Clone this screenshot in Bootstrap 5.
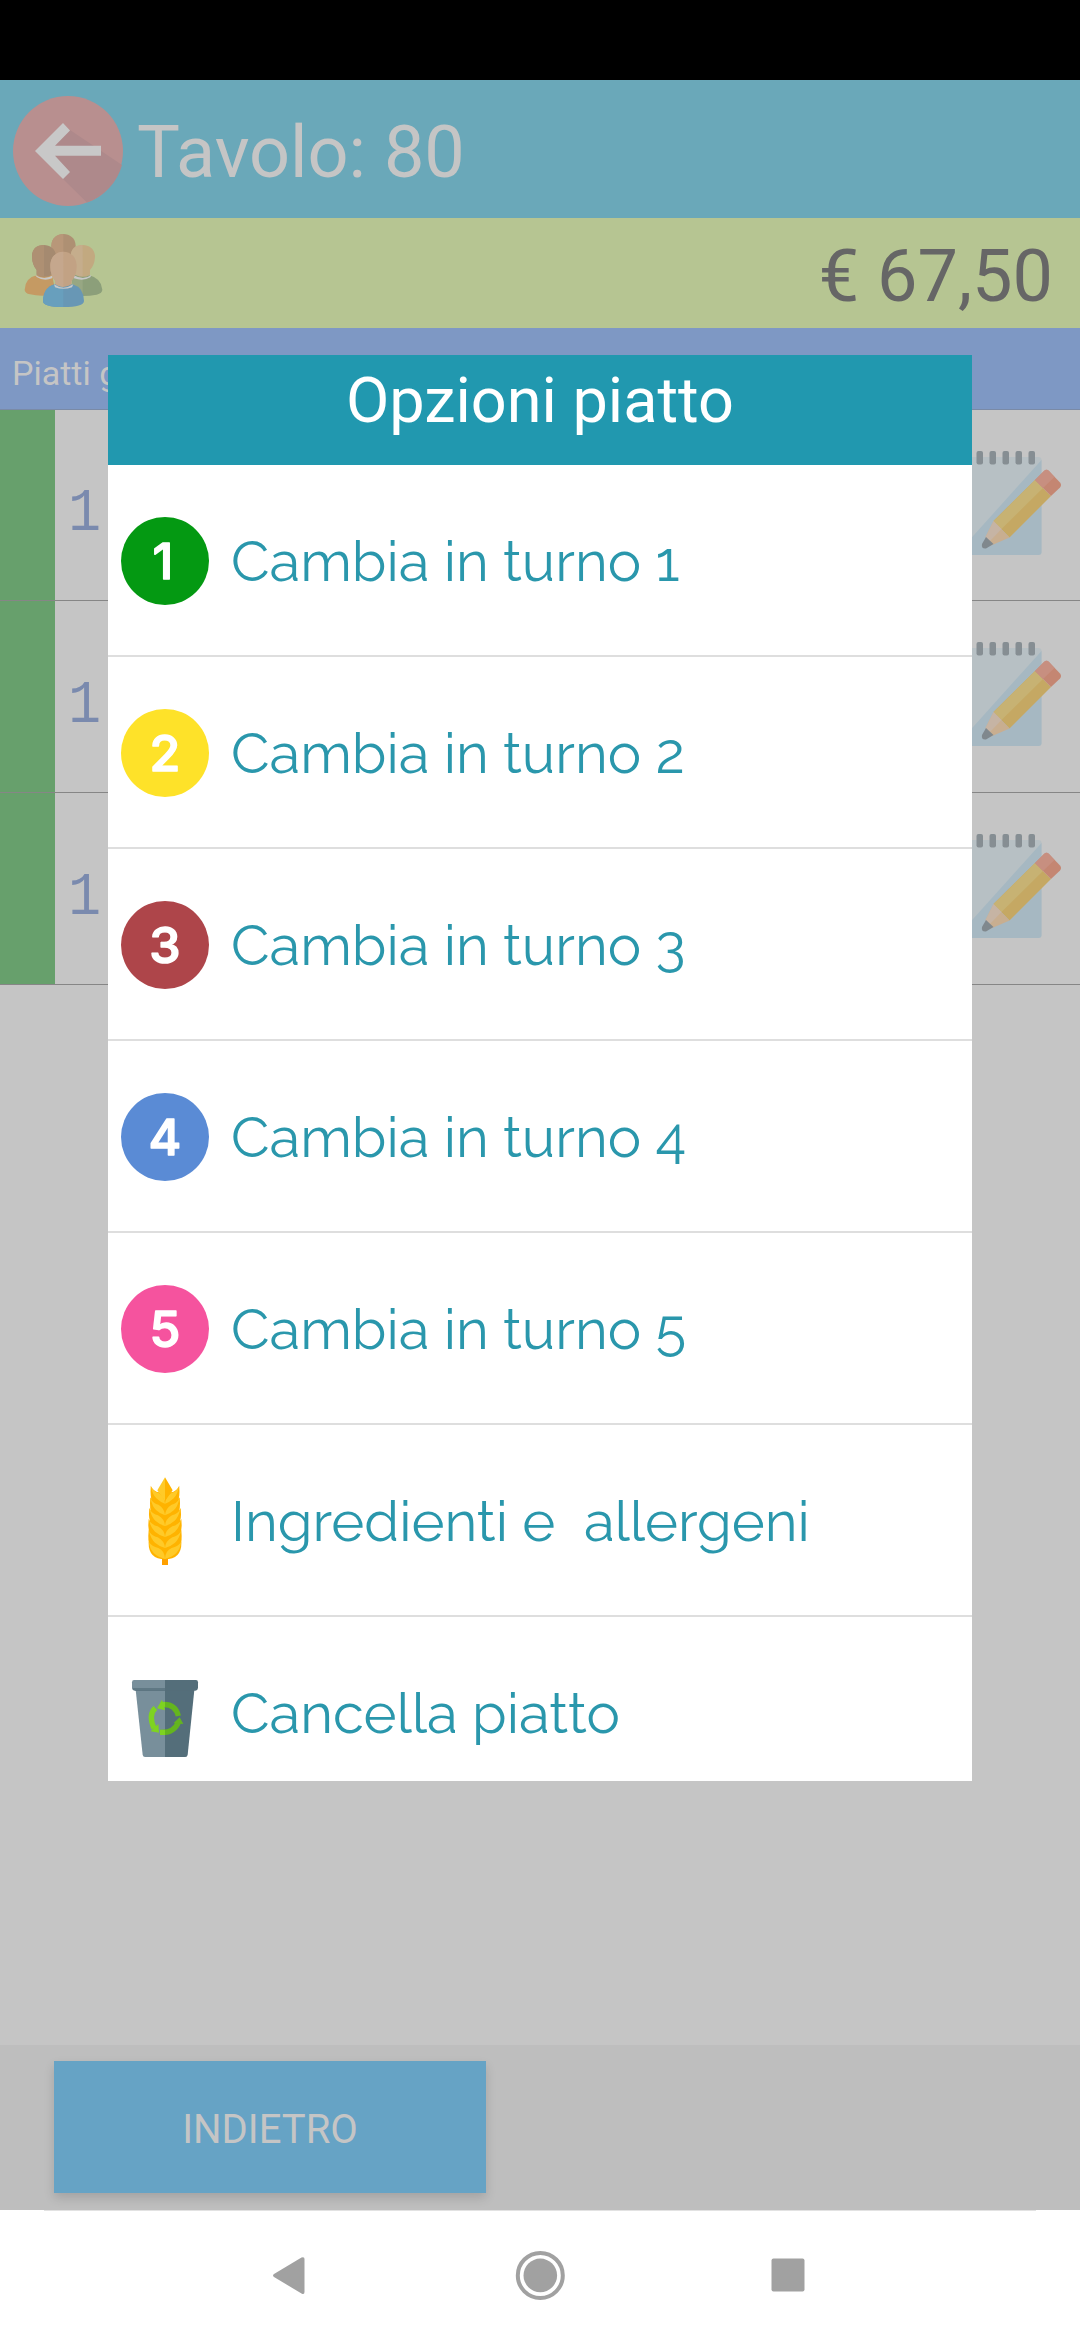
<!DOCTYPE html>
<html lang="it">
<head>
<meta charset="utf-8">
<meta name="viewport" content="width=device-width, initial-scale=1">
<title>Tavolo 80</title>
<link href="https://cdn.jsdelivr.net/npm/bootstrap@5.3.0/dist/css/bootstrap.min.css" rel="stylesheet">
<style>
  body { height: 2340px; font-family: Roboto, sans-serif; background: #c5c5c5; line-height: 1; overflow: hidden; }
  svg { display: block; flex: none; }
  .status-strip { height: 80px; }
  .table-bar { height: 138px; background: #6aa8b9; color: #c5c5c5; font-size: 72px; padding-left: 13px; }
  .table-bar span { margin-left: 14px; padding-top: 7px; }
  .total-bar { height: 110px; background: #b6c592; color: #666; font-size: 72px; padding: 0 27px 0 20px; }
  .total-bar svg { margin-bottom: 6px; }
  .total-bar span { padding-top: 7px; }
  .section-bar { height: 82px; background: #7e98c4; color: #c5c5c5; font-size: 34px; padding: 8px 0 0 12px; border-bottom: 1px solid #7a8aa6; }
  .dish { height: 192px; border-bottom: 1px solid #868686; }
  .dish:first-child { height: 191px; }
  .dish-turn { width: 55px; background: #67a06c; }
  .dish-qty { width: 60px; color: #7a8aae; font: 62px "Liberation Mono", monospace; padding-top: 17px; }
  .dish-qty span { transform: scaleX(.88); }
  .dish-note { margin: 35px 16px 0 0; }
  .bottom-bar { height: 165px; background: #bebebe; padding: 16px 54px; }
  .btn-back { width: 432px; height: 132px; background: #66a3c5; color: #c5c5c5; font-size: 40px; box-shadow: 0 5px 10px rgba(0,0,0,.14); padding: 6px 0 0; }
  .nav-strip { height: 130px; background: #fff; }
  .nav-strip .hairline { height: 1px; background: #e2e2e2; margin: 0 44px; }
  .options-panel { left: 108px; top: 355px; width: 864px; height: 1426px; }
  .options-title { height: 110px; background: #2198af; font-size: 63px; padding-top: 14px; }
  .options-panel .list-group-item { height: 192px; padding: 1px 0 0 13px; border-color: #dedede; border-width: 0 0 2px; color: #2a97ac; font: 56.200px Raleway, Lato, sans-serif; white-space: pre; }
  .options-panel .list-group-item:last-child { height: 190px; }
  .options-panel .list-group-item > span { margin-left: 22px; padding-top: 1px; }
  .num { font: 500 50px Inter, sans-serif; fill: #fff; stroke: #fff; stroke-width: 1.500px; stroke-linejoin: round; text-anchor: middle; }
</style>
</head>
<body class="d-flex flex-column">
<svg width="0" height="0" class="position-absolute">
  <defs>
    <symbol id="note" viewBox="960 445 104 115">
      <rect x="940" y="457" width="101.500" height="98" rx="3" fill="#b7c0c4"/>
      <path d="M1041.500 460V552a3 3 0 0 1-3 3H956z" fill="#a6b8c2"/>
      <g fill="#868e93"><rect x="976.500" y="451" width="6.500" height="13.500" rx="2"/><rect x="989.500" y="451" width="6.500" height="13.500" rx="2"/><rect x="1002.500" y="451" width="6.500" height="13.500" rx="2"/><rect x="1015.500" y="451" width="6.500" height="13.500" rx="2"/><rect x="1028.500" y="451" width="6.500" height="13.500" rx="2"/></g>
      <path d="M1035 480L1051 496 1009.500 537.500 993.500 521z" fill="#c5a863"/>
      <path d="M1035 480L1043 488 1001.500 529 993.500 521z" fill="#c7b273"/>
      <path d="M1035 480l9-9q2.500-2.500 5 0l11 11.500q2 2.500 0 5L1051 496z" fill="#c48672"/>
      <path d="M1035 480l9-9q2.500-2.500 5 0l5.500 6L1043 488z" fill="#c78f80"/>
      <path d="M993.500 521L1009.500 537.500 991 545.500 985.500 537z" fill="#c8ae90"/>
      <path d="M993.500 521L1001.500 529 989 542 985.500 537z" fill="#c6b4a4"/>
      <path d="M986 537L993.500 544 986 548.500Q981 549 982 544z" fill="#80888d"/>
    </symbol>
  </defs>
</svg>

<div class="status-strip bg-black flex-shrink-0"></div>

<header class="table-bar d-flex align-items-center flex-shrink-0">
  <svg width="110" height="110" viewBox="13 97 110 110" class="mb-1 mt-2">
    <circle cx="68" cy="152" r="55" fill="#b88f8f"/>
    <path d="M70 131L122 166A55 55 0 0 1 87 203.500L63 180 40 152z" fill="#ae898b"/>
    <path d="M63 124l7 7.500-15 15.200h46v10H55l15 16.300-7 7-28-28z" fill="#c8c8c8"/>
  </svg>
  <span>Tavolo: 80</span>
</header>

<section class="total-bar d-flex align-items-center justify-content-between flex-shrink-0">
  <svg width="90" height="90" viewBox="0 0 270 270">
    <path d="M94 62C95 15 166 15 167 62L160 100H100z" fill="#ae9073"/><path d="M94 62C95 38 112 27 130 27V100H100z" fill="#b89779"/>
    <path d="M14 194Q16 158 50 151L96 150 108 206Q70 217 30 208 14 204 14 194z" fill="#c59a63"/>
    <path d="M152 150L208 151Q244 160 247 194 247 204 230 209 200 215 165 212z" fill="#8c9f7a"/>
    <path d="M152 150L188 158V213L165 212z" fill="#97a783"/>
    <path d="M46 150Q72 168 100 150L96 160Q72 170 50 156zM160 150Q190 168 214 150L211 157Q190 170 162 160z" fill="#c8c8c8"/>
    <path d="M36 95C35 48 108 48 108 95Q108 118 97 133L96 149Q72 162 50 149V135Q37 120 36 95z" fill="#a58a70"/>
    <path d="M36 95C36 68 52 60 72 60V154Q58 154 50 149V135Q37 120 36 95z" fill="#ae9073"/>
    <path d="M152 95C152 48 225 48 225 95Q224 120 210 135V149Q190 162 166 149L165 130Q152 115 152 95z" fill="#c2a980"/>
    <path d="M152 95C152 68 169 60 188 60V154Q175 154 166 149L165 130Q152 115 152 95z" fill="#c5ad8c"/>
    <path d="M69 228Q70 188 104 178L158 178Q191 188 192 228 191 246 130 246 69 246 69 228z" fill="#6897b5"/>
    <path d="M69 228Q70 188 104 178H130V246Q69 246 69 228z" fill="#689fbd"/>
    <path d="M102 178Q130 198 160 178L156 187Q130 196 105 187z" fill="#c8c8c8"/>
    <path d="M91 126C89 65 172 65 170 126Q170 150 155 168V178Q130 194 106 178V168Q91 150 91 126z" fill="#c2a284"/>
    <path d="M91 126C90 95 108 80 130 80V186Q116 186 106 178V168Q91 150 91 126z" fill="#c5a78d"/>
  </svg>
  <span>€ 67,50</span>
</section>

<div class="section-bar d-flex align-items-center flex-shrink-0">Piatti già ordinati</div>

<main class="flex-grow-1">
  <div class="dish d-flex">
    <div class="dish-turn"></div>
    <div class="dish-qty d-flex align-items-center justify-content-center"><span>1</span></div>
    <svg class="dish-note ms-auto" width="104" height="115"><use href="#note"/></svg>
  </div>
  <div class="dish d-flex">
    <div class="dish-turn"></div>
    <div class="dish-qty d-flex align-items-center justify-content-center"><span>1</span></div>
    <svg class="dish-note ms-auto" width="104" height="115"><use href="#note"/></svg>
  </div>
  <div class="dish d-flex">
    <div class="dish-turn"></div>
    <div class="dish-qty d-flex align-items-center justify-content-center"><span>1</span></div>
    <svg class="dish-note ms-auto" width="104" height="115"><use href="#note"/></svg>
  </div>
</main>

<footer class="bottom-bar flex-shrink-0">
  <button class="btn btn-back rounded-0 border-0">INDIETRO</button>
</footer>

<nav class="nav-strip flex-shrink-0">
  <div class="hairline"></div>
  <svg width="1080" height="129" viewBox="0 2211 1080 129" fill="#a1a1a1">
    <path d="M274 2274L301.500 2257.500Q304.500 2256.500 304.500 2259V2292Q304.500 2295 301.500 2293.500L274 2277Q272 2275.500 274 2274z"/>
    <circle cx="540.300" cy="2275.400" r="22.500" fill="none" stroke="#a1a1a1" stroke-width="4"/><circle cx="540.300" cy="2275.400" r="16.800"/>
    <rect x="771.500" y="2258.500" width="33" height="33" rx="2"/>
  </svg>
</nav>

<div class="options-panel position-absolute bg-white overflow-hidden" role="dialog">
  <div class="options-title text-white text-center">Opzioni piatto</div>
  <div class="list-group list-group-flush">
    <div class="list-group-item d-flex align-items-center"><svg width="88" height="88"><circle cx="44" cy="44" r="44" fill="#049912"/><text class="num" x="42" y="62">1</text></svg><span>Cambia in turno 1</span></div>
    <div class="list-group-item d-flex align-items-center"><svg width="88" height="88"><circle cx="44" cy="44" r="44" fill="#fee229"/><text class="num" x="44" y="62">2</text></svg><span>Cambia in turno 2</span></div>
    <div class="list-group-item d-flex align-items-center"><svg width="88" height="88"><circle cx="44" cy="44" r="44" fill="#ae454a"/><text class="num" x="44" y="62">3</text></svg><span>Cambia in turno 3</span></div>
    <div class="list-group-item d-flex align-items-center"><svg width="88" height="88"><circle cx="44" cy="44" r="44" fill="#5a8bd5"/><text class="num" x="44" y="62">4</text></svg><span>Cambia in turno 4</span></div>
    <div class="list-group-item d-flex align-items-center"><svg width="88" height="88"><circle cx="44" cy="44" r="44" fill="#f5539e"/><text class="num" x="44" y="62">5</text></svg><span>Cambia in turno 5</span></div>
    <div class="list-group-item d-flex align-items-center">
      <svg width="88" height="88" viewBox="63 171 264 264">
        <defs>
          <g id="half"><path d="M-49 0Q-40 18-20 20L0 40V60H-30Q-51 45-50 18z" fill="#ffb300"/><path d="M-48 4Q-38 19-22 22-2 32 0 54-16 50-30 38-42 28-48 4z" fill="#ffca28"/></g>
          <g id="pair"><use href="#half"/><use href="#half" transform="scale(-1 1)"/></g>
        </defs>
        <path d="M186 405h18v30h-18z" fill="#ffa000"/>
        <path d="M146 363Q143 417 195 418 247 417 244 363L236 230 195 215 154 230z" fill="#ffb300"/>
        <use href="#pair" transform="translate(195 197) scale(.87 1)"/>
        <use href="#pair" transform="translate(195 232) scale(.9 1)"/>
        <use href="#pair" transform="translate(195 264) scale(.96 1)"/>
        <use href="#pair" x="195" y="297"/>
        <use href="#pair" x="195" y="330"/>
        <path d="M147 366Q155 380 175 384 194 392 195 417 150 405 147 366zM243 366Q235 380 215 384 196 392 195 417 240 405 243 366z" fill="#ffca28"/>
        <path d="M195 172L172 211 195 243z" fill="#ffca28"/><path d="M195 172L218 211 195 243z" fill="#ffb300"/>
      </svg><span>Ingredienti e  allergeni</span></div>
    <div class="list-group-item d-flex align-items-center">
      <svg width="88" height="88" viewBox="63 747 264 264">
        <path d="M106 800H195V1011H135Q129 1011 128 1004z" fill="#788f9b"/><path d="M284 800H195V1011H256Q262 1011 263 1004z" fill="#546e7a"/>
        <path d="M106 803H195V813H106z" fill="#546e7a"/>
        <path d="M102 780H195V804H96V787Q96 780 102 780z" fill="#788f9b"/><path d="M96 804H195V812H104Q97 812 96 804z" fill="#5f7884"/>
        <path d="M195 780H288Q294 780 294 787V804Q293 812 286 812H195z" fill="#546e7a"/>
        <g fill="none" stroke-width="16"><path d="M184 854Q226 850 235 888" stroke="#64b51e"/><path d="M236 905Q222 940 180 937" stroke="#64b51e"/><path d="M166 864Q144 884 162 925" stroke="#7ed321"/><path d="M184 854H195M180 937H195" stroke="#7ed321"/></g>
        <path d="M186 839L171 865 195 871z M175 912L177 938 152 934z" fill="#7ed321"/><path d="M239 892L250 912 221 909z" fill="#64b51e"/>
      </svg><span>Cancella piatto</span></div>
  </div>
</div>
<script src="https://cdn.jsdelivr.net/npm/bootstrap@5.3.0/dist/js/bootstrap.bundle.min.js"></script>
</body>
</html>
